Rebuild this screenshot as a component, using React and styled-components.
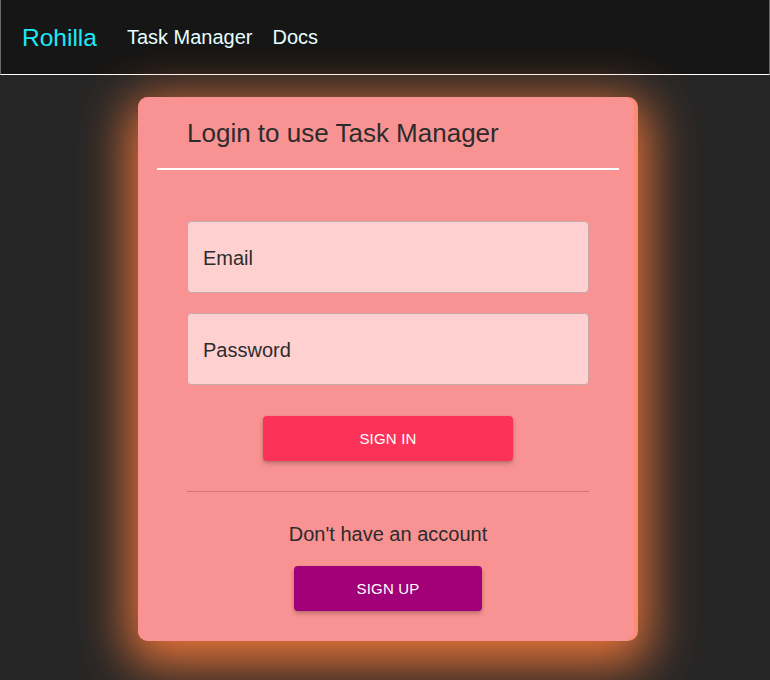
import styled, { createGlobalStyle } from "styled-components";

const GlobalStyle = createGlobalStyle`
  html, body {
    margin: 0;
    padding: 0;
    background: #262626;
    font-family: "Liberation Sans", Arial, sans-serif;
  }
  #root {
    min-height: 680px;
  }
`;

const Page = styled.div`
  min-height: 680px;
  background: #262626;
  overflow: hidden;
`;

const Nav = styled.nav`
  height: 75px;
  box-sizing: border-box;
  background: #161616;
  border-left: 1px solid #6a6a6a;
  border-right: 1px solid #6a6a6a;
  border-bottom: 1px solid #ffffff;
  display: flex;
  align-items: center;
  padding-left: 21px;
`;

const Logo = styled.a`
  color: #1de9f6;
  font-size: 24.5px;
  margin-right: 30px;
  margin-top: 1px;
`;

const NavLink = styled.a`
  color: #e6ffff;
  font-size: 20px;
  margin-right: 20px;
`;

const Main = styled.main`
  display: flex;
  justify-content: center;
  padding-top: 22px;
  padding-left: 6px;
`;

const Card = styled.div`
  width: 500px;
  background: #fb8d74;
  border-radius: 10px;
  box-shadow: 0 14px 50px 10px rgba(255, 125, 60, 0.9);
  display: flex;
`;

const CardInner = styled.div`
  flex: 1;
  background: #f99292;
  border-radius: 10px;
  margin: 0 4px 0 0;
  padding: 0 0 30px;
`;

const Header = styled.div`
  margin: 0 15px 0 19px;
  padding: 20px 0 21px 30px;
  border-bottom: 2px solid #ffffff;
`;

const Title = styled.h2`
  margin: 0;
  font-size: 26px;
  font-weight: 400;
  color: #2c2c2c;
  line-height: 30px;
  position: relative;
  top: 1px;
`;

const Form = styled.form`
  display: flex;
  flex-direction: column;
  align-items: center;
  padding: 51px 45px 0 49px;
`;

const Input = styled.input`
  width: 100%;
  height: 72px;
  box-sizing: border-box;
  background: #ffd0d0;
  border: 1px solid #c4a8a8;
  border-radius: 4px;
  padding: 2px 15px 0;
  font-family: "Liberation Sans", Arial, sans-serif;
  font-size: 20px;
  color: #2c2c2c;
  margin-bottom: 20px;
  outline: none;
  &::placeholder {
    color: #2c2c2c;
  }
`;

const Button = styled.button`
  width: ${(p) => p.$w}px;
  height: 45px;
  border: none;
  border-radius: 4px;
  background: ${(p) => p.$bg};
  color: #ffffff;
  font-family: "Liberation Sans", Arial, sans-serif;
  font-size: 15px;
  text-transform: uppercase;
  letter-spacing: 0.2px;
  box-shadow: 0 3px 5px rgba(0, 0, 0, 0.18), 0 1px 3px rgba(0, 0, 0, 0.12);
  cursor: pointer;
`;

const Divider = styled.hr`
  width: 100%;
  border: none;
  border-top: 1px solid #d87474;
  margin: 30px 0 0;
`;

const Prompt = styled.p`
  margin: 30px 0 20px;
  font-size: 20px;
  color: #2c2c2c;
  line-height: 24px;
`;

export default function App() {
  return (
    <>
      <GlobalStyle />
      <Page>
        <Nav>
          <Logo>Rohilla</Logo>
          <NavLink>Task Manager</NavLink>
          <NavLink>Docs</NavLink>
        </Nav>
        <Main>
          <Card>
            <CardInner>
              <Header>
                <Title>Login to use Task Manager</Title>
              </Header>
              <Form onSubmit={(e) => e.preventDefault()}>
                <Input type="email" placeholder="Email" />
                <Input type="password" placeholder="Password" />
                <Button type="submit" $bg="#fb3358" $w={250} style={{ marginTop: 11 }}>
                  Sign In
                </Button>
                <Divider />
                <Prompt>Don't have an account</Prompt>
                <Button type="button" $bg="#a10078" $w={188}>
                  Sign Up
                </Button>
              </Form>
            </CardInner>
          </Card>
        </Main>
      </Page>
    </>
  );
}
